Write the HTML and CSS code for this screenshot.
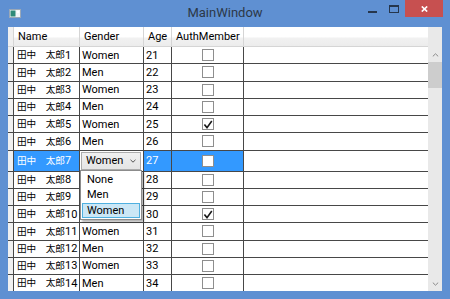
FILE: index.html
```html
<!DOCTYPE html>
<html>
<head>
<meta charset="utf-8">
<link rel="stylesheet" href="styles.css">
</head>
<body>
<div class="window">
  <div class="titlebar">
    <div class="app-icon">
      <svg width="12" height="9" viewBox="0 0 12 9"><rect x="0.5" y="0.5" width="11" height="8" fill="#f2f4f6" stroke="#9aa8b8"/><rect x="1.5" y="1.5" width="5" height="6" fill="#2f8a78"/><rect x="8" y="2" width="2" height="2" fill="#ffffff"/></svg>
    </div>
    <div class="title">MainWindow</div>
    <div class="controls">
      <div class="btn btn-min"><span class="min-glyph"></span></div>
      <div class="btn btn-max"><span class="max-glyph"></span></div>
      <div class="btn btn-close">
        <svg width="7" height="6" viewBox="0 0 7 6"><path d="M0.8 0.5 L6.2 5.5 M6.2 0.5 L0.8 5.5" stroke="#ffffff" stroke-width="1.7"/></svg>
      </div>
    </div>
  </div>
  <div class="client">
    <div class="grid">
      <div class="hdr">
        <div class="h rh"></div>
        <div class="h">Name</div>
        <div class="h">Gender</div>
        <div class="h">Age</div>
        <div class="h">AuthMember</div>
        <div class="h fill"></div>
      </div>
      <div class="rows">
        <div class="row"><div class="c rh"></div><div class="c name"><span class="jp">田中　太郎</span>1</div><div class="c">Women</div><div class="c">21</div><div class="c chk"><span class="cb"></span></div><div class="c fill"></div></div>
        <div class="row"><div class="c rh"></div><div class="c name"><span class="jp">田中　太郎</span>2</div><div class="c">Men</div><div class="c">22</div><div class="c chk"><span class="cb"></span></div><div class="c fill"></div></div>
        <div class="row"><div class="c rh"></div><div class="c name"><span class="jp">田中　太郎</span>3</div><div class="c">Women</div><div class="c">23</div><div class="c chk"><span class="cb"></span></div><div class="c fill"></div></div>
        <div class="row"><div class="c rh"></div><div class="c name"><span class="jp">田中　太郎</span>4</div><div class="c">Men</div><div class="c">24</div><div class="c chk"><span class="cb"></span></div><div class="c fill"></div></div>
        <div class="row"><div class="c rh"></div><div class="c name"><span class="jp">田中　太郎</span>5</div><div class="c">Women</div><div class="c">25</div><div class="c chk"><span class="cb"><svg width="10" height="10" viewBox="0 0 10 10"><path d="M1.4 5.4 L4 8.6 L8.8 2" fill="none" stroke="#1a1a1a" stroke-width="1.6"/></svg></span></div><div class="c fill"></div></div>
        <div class="row"><div class="c rh"></div><div class="c name"><span class="jp">田中　太郎</span>6</div><div class="c">Men</div><div class="c">26</div><div class="c chk"><span class="cb"></span></div><div class="c fill"></div></div>
        <div class="row row-sel"><div class="c rh"></div><div class="c name sel"><span class="jp">田中　太郎</span>7</div><div class="c edit"><div class="combo"><span>Women</span><svg width="6" height="4" viewBox="0 0 6 4"><path d="M0.5 0.8 L3 3.2 L5.5 0.8" fill="none" stroke="#555" stroke-width="1"/></svg></div></div><div class="c sel">27</div><div class="c chk sel"><span class="cb"></span></div><div class="c fill"></div></div>
        <div class="row"><div class="c rh"></div><div class="c name"><span class="jp">田中　太郎</span>8</div><div class="c"></div><div class="c">28</div><div class="c chk"><span class="cb"></span></div><div class="c fill"></div></div>
        <div class="row"><div class="c rh"></div><div class="c name"><span class="jp">田中　太郎</span>9</div><div class="c"></div><div class="c">29</div><div class="c chk"><span class="cb"></span></div><div class="c fill"></div></div>
        <div class="row"><div class="c rh"></div><div class="c name"><span class="jp">田中　太郎</span>10</div><div class="c"></div><div class="c">30</div><div class="c chk"><span class="cb"><svg width="10" height="10" viewBox="0 0 10 10"><path d="M1.4 5.4 L4 8.6 L8.8 2" fill="none" stroke="#1a1a1a" stroke-width="1.6"/></svg></span></div><div class="c fill"></div></div>
        <div class="row"><div class="c rh"></div><div class="c name"><span class="jp">田中　太郎</span>11</div><div class="c">Women</div><div class="c">31</div><div class="c chk"><span class="cb"></span></div><div class="c fill"></div></div>
        <div class="row"><div class="c rh"></div><div class="c name"><span class="jp">田中　太郎</span>12</div><div class="c">Men</div><div class="c">32</div><div class="c chk"><span class="cb"></span></div><div class="c fill"></div></div>
        <div class="row"><div class="c rh"></div><div class="c name"><span class="jp">田中　太郎</span>13</div><div class="c">Women</div><div class="c">33</div><div class="c chk"><span class="cb"></span></div><div class="c fill"></div></div>
        <div class="row"><div class="c rh"></div><div class="c name"><span class="jp">田中　太郎</span>14</div><div class="c">Men</div><div class="c">34</div><div class="c chk"><span class="cb"></span></div><div class="c fill"></div></div>
      </div>
    </div>
    <div class="vscroll">
      <div class="corner"></div>
      <div class="sbtn"><svg width="7" height="4" viewBox="0 0 7 4"><path d="M0.8 3.4 L3.5 0.8 L6.2 3.4" fill="none" stroke="#8a8a8a" stroke-width="1"/></svg></div>
      <div class="thumb"></div>
      <div class="track"></div>
      <div class="sbtn"><svg width="7" height="4" viewBox="0 0 7 4"><path d="M0.8 0.6 L3.5 3.2 L6.2 0.6" fill="none" stroke="#8a8a8a" stroke-width="1"/></svg></div>
    </div>
    <div class="popup">
      <div class="item">None</div>
      <div class="item">Men</div>
      <div class="item hot">Women</div>
    </div>
  </div>
</div>
</body>
</html>
```

FILE: styles.css
```css
* { box-sizing: border-box; }
html, body { margin: 0; padding: 0; }
body {
  font-family: Roboto, "Noto Sans CJK JP", sans-serif;
  font-size: 11px;
  color: #000;
}
.window {
  width: 450px;
  height: 299px;
  background: #5f90d2;
  display: flex;
  flex-direction: column;
  overflow: hidden;
}
.titlebar {
  height: 27px;
  flex: none;
  display: grid;
  grid-template-columns: 1fr auto 1fr;
  align-items: start;
}
.app-icon {
  margin: 9px 0 0 9px;
  height: 9px;
  display: flex;
}
.title {
  font-size: 13px;
  line-height: 26px;
  color: #2c3848;
}
.controls {
  justify-self: end;
  display: flex;
  margin-right: 7px;
}
.btn {
  height: 17px;
  display: flex;
  justify-content: center;
}
.btn-min { width: 21px; padding-top: 11px; }
.btn-max { width: 22px; padding-top: 5px; }
.btn-close {
  width: 38px;
  background: #c75050;
  align-items: center;
}
.min-glyph {
  display: block;
  width: 9px;
  height: 2px;
  background: #26364c;
}
.max-glyph {
  display: block;
  width: 10px;
  height: 8px;
  border: 1px solid #26364c;
  border-top-width: 2px;
}
.client {
  flex: 1;
  margin: 0 8px 8px;
  background: #fff;
  display: flex;
  position: relative;
  overflow: hidden;
}
.grid {
  flex: 1;
  min-width: 0;
  display: flex;
  flex-direction: column;
}
.hdr, .row {
  display: grid;
  grid-template-columns: 6px 66px 64px 28px 72px 1fr;
}
.hdr {
  height: 20px;
  flex: none;
  background: linear-gradient(#ffffff 0%, #ffffff 50%, #f1f1f1 60%, #ececec 100%);
  border-bottom: 1px solid #d5d5d5;
}
.h {
  border-right: 1px solid #d5d5d5;
  padding-left: 4px;
  line-height: 19px;
  white-space: nowrap;
}
.h.rh { background: #f0f0f0; padding: 0; }
.h.fill { border-right: none; }
.rows {
  flex: 1;
  overflow: hidden;
}
.row { height: 17.25px; }
.row-sel { height: 21px; }
.c {
  border-right: 1px solid #474747;
  border-bottom: 1px solid #474747;
  padding-left: 2px;
  display: flex;
  align-items: center;
  white-space: nowrap;
  line-height: 1;
  overflow: hidden;
}
.c.rh { background: #f0f0f0; padding: 0; }
.c.name { padding-left: 3px; }
.jp {
  font-family: "Noto Sans CJK JP", sans-serif;
  font-size: 9.6px;
}
.c.fill { border-right: none; }
.c.chk { justify-content: center; padding-left: 0; }
.cb {
  width: 12px;
  height: 12px;
  border: 1px solid #8e8e8e;
  background: #fff;
  display: flex;
  align-items: center;
  justify-content: center;
}
.sel {
  background: #3399ff;
  color: #fff;
}
.c.edit {
  padding: 1px 2px 1px 1px;
  align-items: stretch;
}
.combo {
  flex: 1;
  border: 1px solid #acacac;
  background: linear-gradient(#f0f0f0, #e5e5e5);
  display: flex;
  align-items: center;
  justify-content: space-between;
  padding: 0 4px 0 4px;
  color: #000;
}
.vscroll {
  width: 14px;
  flex: none;
  background: #e9e9e9;
  display: flex;
  flex-direction: column;
}
.corner { height: 20px; flex: none; }
.sbtn {
  height: 15px;
  flex: none;
  display: flex;
  align-items: center;
  justify-content: center;
}
.thumb {
  height: 26px;
  flex: none;
  background: #cdcdcd;
}
.track { flex: 1; }
.popup {
  position: absolute;
  left: 72px;
  top: 143px;
  width: 62px;
  height: 50px;
  background: #fff;
  border: 1px solid #8c8c8c;
  box-shadow: 2px 2px 2px rgba(0, 0, 0, 0.3);
  padding: 1px;
  display: flex;
  flex-direction: column;
}
.item {
  height: 16px;
  padding-left: 4px;
  display: flex;
  align-items: center;
  border: 1px solid transparent;
}
.item.hot {
  background: #cbe7f6;
  border-color: #4fb0e0;
}
```
